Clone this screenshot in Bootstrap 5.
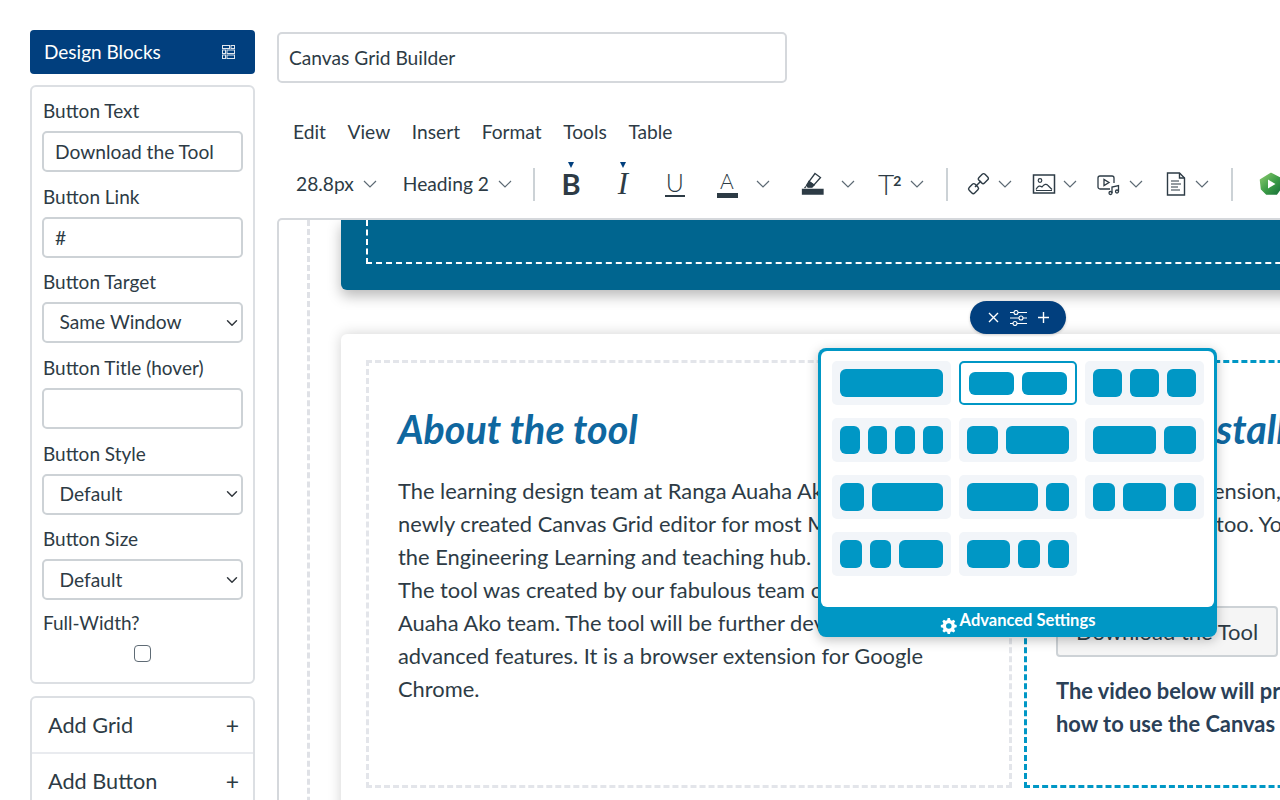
<!DOCTYPE html>
<html lang="en">
<head>
  <meta charset="UTF-8">
  <meta name="viewport" content="width=device-width, initial-scale=1">
  <title>Canvas Grid Builder</title>
  <link href="https://cdn.jsdelivr.net/npm/bootstrap@5.3.0/dist/css/bootstrap.min.css" rel="stylesheet">
  <style>
    html, body { height: 800px; overflow: hidden; }
    body { font-family: Lato, "Open Sans", sans-serif; color: #2d3b45; background: #fff; }
    .app-wrap { padding: 30px 0 0 30px; gap: 22px; }

    /* sidebar */
    .side-col { width: 225px; flex: none; }
    .blocks-head { height: 44px; background: #013f7e; color: #fff; border-radius: 4px; padding: 0 20px 0 14px; font-size: 19px; margin-bottom: 11px; }
    .side-panel { border: 2px solid #dcdfe3; border-radius: 6px; padding: 12px 10px 0 10px; height: 599px; }
    .side-panel .form-label { font-size: 19px; line-height: 24px; margin-bottom: 8px; padding-left: 1px; color: #2d3b45; }
    .side-panel .form-control, .side-panel .form-select { height: 41px; border: 2px solid #cdd2d6; border-radius: 5px; font-size: 19.2px; color: #2d3b45; padding: 0 0 0 11px; margin-bottom: 12.7px; }
    .side-panel .form-select { padding-left: 15.5px; background-position: right 1px center; }
    .side-panel .form-select.last-field { margin-bottom: 11px; }
    .side-panel .form-check-input { width: 17px; height: 17px; margin: 1.5px 0 0; border: 1.5px solid #5f6b75; border-radius: 4px; }
    .add-list { margin: 12px 0 0; border: 2px solid #dcdfe3; border-radius: 6px; }
    .add-list .list-group-item { height: 56px; border: 0; border-bottom: 2px solid #e9ebef; padding: 0 14px 0 16px; font-size: 21.7px; color: #2d3b45; background: transparent; }
    .add-list .list-group-item span:last-child { font-size: 23px; }

    /* main */
    .main-col { width: 1400px; flex: none; }
    .title-input.form-control { width: 510px; height: 51px; border: 2px solid #d5d8dc; border-radius: 5px; font-size: 19.2px; color: #2d3b45; padding: 0 10px; margin-top: 2px; }
    .menu-bar { gap: 21.6px; padding-left: 16px; margin-top: 37px; height: 24px; font-size: 19.2px; line-height: 24px; }
    .tool-bar { padding-left: 19px; height: 44px; margin-top: 18px; font-size: 19.2px; }
    .tb-chev { flex: none; width: 14px; height: 8px; display: block; }
    .tb-sep { flex: none; width: 2px; height: 33px; background: #ccd2d6; }
    .tb-ico { flex: none; width: 24px; height: 24px; display: block; }
    .tb-let { width: 24px; height: 30px; flex: none; text-align: center; line-height: 30px; position: relative; }
    .let-b { font-weight: 700; font-size: 29px; }
    .let-i { font-family: "Liberation Serif", serif; font-style: italic; font-size: 31px; }
    .let-u { font-weight: 300; font-size: 25px; line-height: 26px; }
    .let-u::after { content: ""; position: absolute; left: 2px; right: 2px; bottom: 2px; height: 2px; background: #2d3b45; }
    .let-a { font-size: 21px; line-height: 23px; font-weight: 300; }
    .let-a::after { content: ""; position: absolute; left: 2px; right: 1px; bottom: 1px; height: 5px; background: #2d3b45; }
    .let-t { font-weight: 300; font-size: 28px; text-align: left; }
    .let-t sup { font-weight: 700; font-size: 14px; top: -.65em; left: -1px; }
    .has-mark::before { content: ""; position: absolute; left: 9px; top: -7px; border: 3px solid transparent; border-top: 6px solid #013f7e; border-bottom: 0; }
    .ml-7 { margin-left: 7px; } .ml-8 { margin-left: 8px; } .ml-9 { margin-left: 9px; } .ml-10 { margin-left: 10px; }
    .ml-16 { margin-left: 16px; } .ml-17 { margin-left: 17px; } .ml-18 { margin-left: 18px; } .ml-20 { margin-left: 20px; }
    .ml-21 { margin-left: 21px; } .ml-22 { margin-left: 22px; } .ml-23 { margin-left: 23px; } .ml-24 { margin-left: 24px; }
    .ml-26 { margin-left: 26px; } .ml-28 { margin-left: 28px; } .ml-31 { margin-left: 31px; }

    /* editor */
    .editor-frame { position: relative; width: 1100px; height: 600px; margin-top: 12px; border: 2px solid #d5d8dc; border-bottom: 0; border-radius: 5px 0 0 0; overflow: hidden; }
    .outer-dash { margin-left: 28px; padding-left: 31px; border-left: 3px dashed #dfe1e6; height: 700px; width: 1500px; }
    .top-band { height: 70px; width: 1300px; background: #00658f; border-radius: 0 0 6px 6px; padding: 0 0 0 25px; box-shadow: 0 6px 14px rgba(0,0,0,.28); }
    .top-band div { height: 44px; border: 2px dashed #fff; border-top: 0; }
    .about-card { margin-top: 44px; width: 1300px; height: 560px; background: #fff; border-radius: 6px; box-shadow: 0 0 14px rgba(0,0,0,.18); padding: 26px 25px; gap: 12px; }
    .grid-col-a { width: 646px; height: 428px; flex: none; border: 3px dashed #e3e5ea; padding: 0 29px; }
    .grid-col-b { width: 640px; height: 428px; flex: none; border: 3px dashed #0097c5; padding: 0 29px; }
    .tool-head { font-size: 39.4px; font-weight: 700; font-style: italic; color: #0f679f; line-height: 46px; margin: 43px 0 22px; }
    .tool-copy { font-size: 21.86px; line-height: 33px; white-space: nowrap; margin: 0; }
    .dl-btn.btn { width: 222px; height: 51px; background: #f5f5f5; border: 2px solid #cdd2d6; border-radius: 4px; color: #2d3b45; font-size: 22px; padding: 0; margin-top: 66px; display: block; }
    .tool-note { font-size: 21.86px; line-height: 33px; font-weight: 700; color: #2a4057; white-space: nowrap; margin: 17px 0 0; }

    /* floating controls */
    .row-pill { position: absolute; left: 691px; top: 81px; width: 96px; height: 33px; border-radius: 17px; background: #013f7e; color: #fff; gap: 10px; box-shadow: 0 1px 3px rgba(0,0,0,.2); }
    .layout-pop { position: absolute; left: 539px; top: 128px; width: 399px; height: 289px; background: #0097c5; border-radius: 8px; padding: 3px 3px 0; box-shadow: 0 3px 12px rgba(0,0,0,.25); }
    .pop-body { height: 256px; background: #fff; border-radius: 6px; padding: 10px 11px; display: grid; grid-template-columns: repeat(3, 118.6px); grid-auto-rows: 44px; column-gap: 8px; row-gap: 13px; align-content: start; }
    .pop-foot { height: 30px; color: #fff; font-size: 16.5px; font-weight: 700; gap: 3px; }
    .pop-foot svg { margin-top: 6px; }
    .pop-foot span { margin-top: -3px; }
    .lay-cell { background: #f2f5f9; border-radius: 5px; padding: 8px; gap: 8px; }
    .lay-cell i { display: block; background: #0097c5; border-radius: 6px; flex: 1 1 0; }
    .lay-cell i.w2 { flex-grow: 2; }
    .lay-cell i.w3 { flex-grow: 3; }
    .lay-cell.on { background: #fff; border: 2.5px solid #0097c5; padding: 8.5px; }
  </style>
</head>
<body>
  <div class="app-wrap d-flex">
    <div class="side-col">
      <div class="blocks-head d-flex align-items-center justify-content-between">
        <span>Design Blocks</span>
        <svg width="13" height="14" viewBox="0 0 13 14" fill="none" stroke="#dfe6ee" stroke-width="1"><rect x=".5" y=".5" width="7" height="3"/><rect x="9" y=".5" width="3.5" height="3"/><rect x=".5" y="5" width="3" height="3.5"/><rect x="5" y="5" width="7.5" height="3.5"/><rect x=".5" y="10" width="3" height="3.5"/><rect x="5" y="10" width="7.5" height="3.5"/></svg>
      </div>
      <form class="side-panel">
        <label class="form-label d-block">Button Text</label>
        <input class="form-control" type="text" value="Download the Tool">
        <label class="form-label d-block">Button Link</label>
        <input class="form-control" type="text" value="#">
        <label class="form-label d-block">Button Target</label>
        <select class="form-select"><option>Same Window</option></select>
        <label class="form-label d-block">Button Title (hover)</label>
        <input class="form-control" type="text">
        <label class="form-label d-block">Button Style</label>
        <select class="form-select"><option>Default</option></select>
        <label class="form-label d-block">Button Size</label>
        <select class="form-select last-field"><option>Default</option></select>
        <label class="form-label d-block">Full-Width?</label>
        <div class="text-center"><input class="form-check-input" type="checkbox"></div>
      </form>
      <div class="list-group add-list">
        <div class="list-group-item d-flex align-items-center justify-content-between"><span>Add Grid</span><span>+</span></div>
        <div class="list-group-item d-flex align-items-center justify-content-between"><span>Add Button</span><span>+</span></div>
      </div>
    </div>

    <div class="main-col">
      <input class="form-control title-input d-block" type="text" value="Canvas Grid Builder">
      <div class="menu-bar d-flex">
        <span>Edit</span><span>View</span><span>Insert</span><span>Format</span><span>Tools</span><span>Table</span>
      </div>
      <div class="tool-bar d-flex align-items-center">
        <span>28.8px</span>
        <svg class="tb-chev ml-9" viewBox="0 0 14 8" fill="none" stroke="#5d6a74" stroke-width="1.2"><path d="M1 1l6 6 6-6"/></svg>
        <span class="ml-26">Heading 2</span>
        <svg class="tb-chev ml-9" viewBox="0 0 14 8" fill="none" stroke="#5d6a74" stroke-width="1.2"><path d="M1 1l6 6 6-6"/></svg>
        <span class="tb-sep ml-21"></span>
        <span class="tb-let let-b has-mark ml-24">B</span>
        <span class="tb-let let-i has-mark ml-28">I</span>
        <span class="tb-let let-u ml-28">U</span>
        <span class="tb-let let-a ml-28">A</span>
        <svg class="tb-chev ml-17" viewBox="0 0 14 8" fill="none" stroke="#5d6a74" stroke-width="1.2"><path d="M1 1l6 6 6-6"/></svg>
        <svg class="tb-ico ml-31" viewBox="0 0 24 24" fill="none" stroke="#2d3b45" stroke-width="1.3"><path d="M1.500 17.500h20.500v4.500H1.500z" fill="#2d3b45"/><path d="M14 1.500l5.500 4-6.500 7.500-5-3.500z"/><path d="M8 9.500l5 3.500-2 2.200H7l-1.500-1.700z" fill="#2d3b45"/><path d="M5 14.500l-1.500 1.500"/></svg>
        <svg class="tb-chev ml-16" viewBox="0 0 14 8" fill="none" stroke="#5d6a74" stroke-width="1.2"><path d="M1 1l6 6 6-6"/></svg>
        <span class="tb-let let-t ml-23">T<sup>2</sup></span>
        <svg class="tb-chev ml-8" viewBox="0 0 14 8" fill="none" stroke="#5d6a74" stroke-width="1.2"><path d="M1 1l6 6 6-6"/></svg>
        <span class="tb-sep ml-22"></span>
        <svg class="tb-ico ml-18" viewBox="0 0 24 24" fill="none" stroke="#2d3b45" stroke-width="1.4"><path d="M13 5.500l3.200-3.200a2 2 0 0 1 2.800 0l2.700 2.700a2 2 0 0 1 0 2.800L18.500 11a2 2 0 0 1-2.800 0L13 8.300a2 2 0 0 1 0-2.800z"/><path d="M3.200 15.500l3.200-3.200a2 2 0 0 1 2.800 0l2.700 2.700a2 2 0 0 1 0 2.800L8.700 21a2 2 0 0 1-2.800 0l-2.700-2.700a2 2 0 0 1 0-2.800z"/><path d="M9 15l6-6"/></svg>
        <svg class="tb-chev ml-8" viewBox="0 0 14 8" fill="none" stroke="#5d6a74" stroke-width="1.2"><path d="M1 1l6 6 6-6"/></svg>
        <svg class="tb-ico ml-20" viewBox="0 0 24 24" fill="none" stroke="#2d3b45" stroke-width="1.5"><rect x="1.500" y="3" width="21" height="18"/><circle cx="8" cy="8.500" r="1.800" stroke-width="1.200"/><path d="M4 17.500c2-4 4-4 6-2.500 2-3 4.500-3.500 6-1.500l4 4M4 18.500h16" stroke-width="1.200"/></svg>
        <svg class="tb-chev ml-7" viewBox="0 0 14 8" fill="none" stroke="#5d6a74" stroke-width="1.2"><path d="M1 1l6 6 6-6"/></svg>
        <svg class="tb-ico ml-20" viewBox="0 0 24 24" fill="none" stroke="#2d3b45" stroke-width="1.300"><path d="M13 17H3a2 2 0 0 1-2-2V6a2 2 0 0 1 2-2h12a2 2 0 0 1 2 2v5"/><path d="M7 7.500v6l5-3z"/><circle cx="13.500" cy="21" r="1.500"/><circle cx="20" cy="19.500" r="1.500"/><path d="M15 21v-6l6.500-1.500v6"/></svg>
        <svg class="tb-chev ml-8" viewBox="0 0 14 8" fill="none" stroke="#5d6a74" stroke-width="1.2"><path d="M1 1l6 6 6-6"/></svg>
        <svg class="tb-ico ml-21" viewBox="0 0 24 24" fill="none" stroke="#2d3b45" stroke-width="1.400"><path d="M3.500 1h12l5 5v17h-17z"/><path d="M15.500 1v5h5"/><path d="M7 9h8M7 12h10M7 15h7M7 18h9" stroke-width="1.200"/></svg>
        <svg class="tb-chev ml-7" viewBox="0 0 14 8" fill="none" stroke="#5d6a74" stroke-width="1.2"><path d="M1 1l6 6 6-6"/></svg>
        <span class="tb-sep ml-22"></span>
        <svg class="tb-ico ml-26" viewBox="0 0 24 24"><defs><linearGradient id="logoGreen" x1="0" y1="0" x2="1" y2="1"><stop offset="0" stop-color="#8ccb6f"/><stop offset=".55" stop-color="#3a9a45"/><stop offset="1" stop-color="#17703a"/></linearGradient></defs><path d="M12 1.500l9 4.500 1.500 9-5 7H7.500L2.500 17 1.500 8z" fill="url(#logoGreen)" stroke="url(#logoGreen)" stroke-width="1.500" stroke-linejoin="round"/><path d="M9 7.500v9l7.500-4.500z" fill="#fff"/></svg>
      </div>

      <div class="editor-frame">
        <div class="outer-dash">
          <div class="top-band"><div></div></div>
          <div class="about-card d-flex">
            <div class="grid-col-a">
              <h2 class="tool-head">About the tool</h2>
              <p class="tool-copy">The learning design team at Ranga Auaha Ako has<br>newly created Canvas Grid editor for most Moodle<br>the Engineering Learning and teaching hub.<br>The tool was created by our fabulous team of the<br>Auaha Ako team. The tool will be further developed with<br>advanced features. It is a browser extension for Google<br>Chrome.</p>
            </div>
            <div class="grid-col-b">
              <h2 class="tool-head">How to Install</h2>
              <p class="tool-copy">To install the extension,<br>Other browsers, too. You</p>
              <button class="btn dl-btn" type="button">Download the Tool</button>
              <p class="tool-note">The video below will provide an overview of<br>how to use the Canvas Grid Builder.</p>
            </div>
          </div>
        </div>

        <div class="row-pill d-flex align-items-center justify-content-center">
          <svg width="13" height="13" viewBox="0 0 13 13" stroke="#fff" stroke-width="1.4"><path d="M2 2l9 9M11 2l-9 9"/></svg>
          <svg width="17" height="16" viewBox="0 0 17 16" fill="none" stroke="#fff" stroke-width="1.100"><path d="M0 2.500h4M8 2.500h9M0 8h9M13 8h4M0 13.500h3M7 13.500h10"/><circle cx="6" cy="2.500" r="2"/><circle cx="11" cy="8" r="2"/><circle cx="5" cy="13.500" r="2"/></svg>
          <svg width="13" height="13" viewBox="0 0 13 13" stroke="#fff" stroke-width="1.400"><path d="M6.500 1v11M1 6.500h11"/></svg>
        </div>

        <div class="layout-pop">
          <div class="pop-body">
            <div class="lay-cell d-flex"><i></i></div>
            <div class="lay-cell on d-flex"><i></i><i></i></div>
            <div class="lay-cell d-flex"><i></i><i></i><i></i></div>
            <div class="lay-cell d-flex"><i></i><i></i><i></i><i></i></div>
            <div class="lay-cell d-flex"><i></i><i class="w2"></i></div>
            <div class="lay-cell d-flex"><i class="w2"></i><i></i></div>
            <div class="lay-cell d-flex"><i></i><i class="w3"></i></div>
            <div class="lay-cell d-flex"><i class="w3"></i><i></i></div>
            <div class="lay-cell d-flex"><i></i><i class="w2"></i><i></i></div>
            <div class="lay-cell d-flex"><i></i><i></i><i class="w2"></i></div>
            <div class="lay-cell d-flex"><i class="w2"></i><i></i><i></i></div>
          </div>
          <div class="pop-foot d-flex align-items-center justify-content-center">
            <svg width="17" height="17" viewBox="0 0 16 16" fill="#fff"><path d="M9.400 1l.4 1.900 1.300.6 1.700-1 1.500 1.600-1 1.600.5 1.300 1.900.5v2.200l-1.900.4-.5 1.300 1 1.700-1.500 1.500-1.700-1-1.300.6-.4 1.800H7.200l-.5-1.900-1.200-.5-1.700 1-1.500-1.500 1-1.700-.6-1.300L.8 9.700V7.500l1.900-.5.500-1.200-1-1.700 1.500-1.500 1.700 1 1.300-.6L7.200 1zM8.300 5.800a2.600 2.600 0 1 0 0 5.200 2.600 2.600 0 0 0 0-5.200z" fill-rule="evenodd"/></svg>
            <span>Advanced Settings</span>
          </div>
        </div>
      </div>
    </div>
  </div>
  <script src="https://cdn.jsdelivr.net/npm/bootstrap@5.3.0/dist/js/bootstrap.bundle.min.js"></script>
</body>
</html>
